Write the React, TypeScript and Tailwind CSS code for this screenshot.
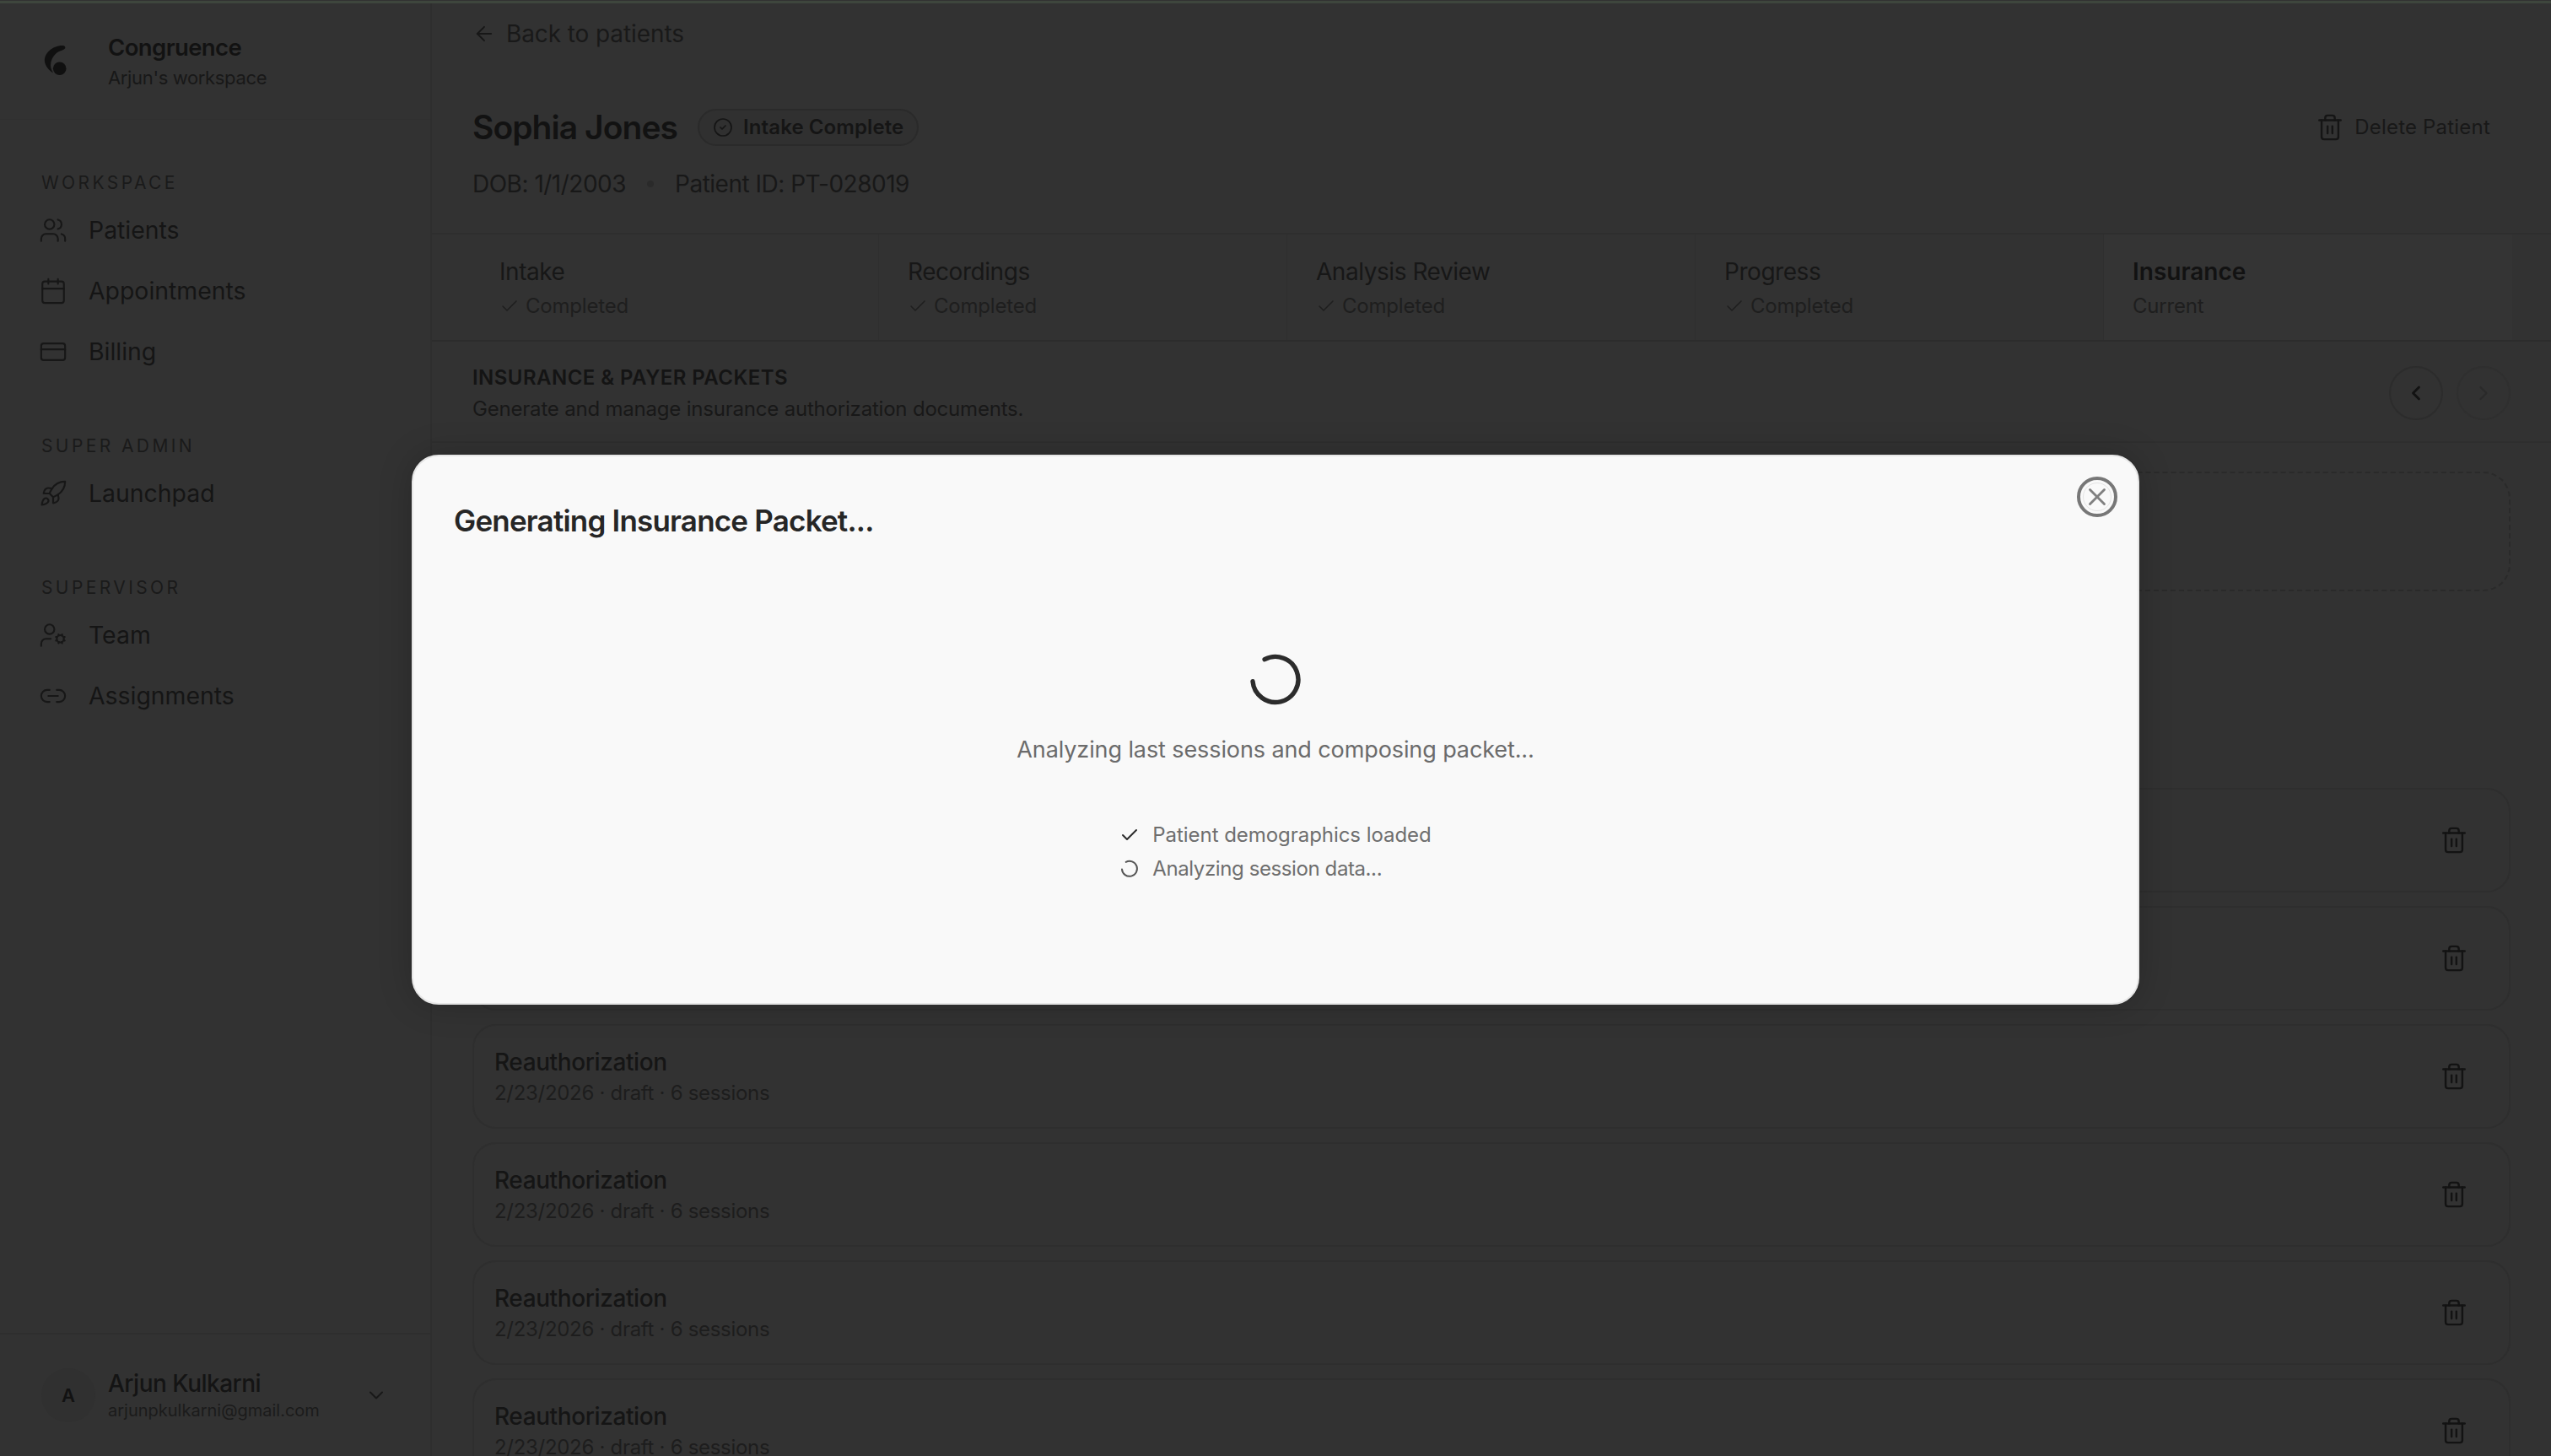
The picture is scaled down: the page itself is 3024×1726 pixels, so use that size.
import React from "react";
import { ArrowLeft, Calendar, Check, ChevronDown, ChevronLeft, ChevronRight, CircleCheck, CreditCard, Link2, Rocket, Trash2, UserCog, Users, X } from "lucide-react";

const font = "font-['Inter','Liberation_Sans',sans-serif]";

function NavItem({ icon: Icon, label }: { icon: React.ElementType; label: string }) {
  return (
    <div className="flex h-[72px] items-center gap-[25px] text-[#151515]">
      <Icon size={34} strokeWidth={1.5} className="-ml-[3px] shrink-0 text-[#171717]" />
      <span className="text-[28.4px]">{label}</span>
    </div>
  );
}

function NavGroup({ title, className, children }: { title: string; className: string; children: React.ReactNode }) {
  return (
    <div className={className}>
      <div className="h-[30px] text-[21px] leading-[30px] tracking-[3.4px] text-[#1a1a1a]">{title}</div>
      <div className="mt-[5px] flex flex-col">{children}</div>
    </div>
  );
}

function Step({ name, status, current }: { name: string; status: string; current?: boolean }) {
  return (
    <div className={`flex w-[484px] flex-col justify-center pl-[34px] pr-8 ${current ? "bg-[#343434]" : "border-r border-[#2f2f2f]"}`}>
      <div className={`text-[28px] leading-[40px] ${current ? "font-semibold text-[#121212]" : "tracking-[-0.45px] text-[#171717]"}`}>{name}</div>
      <div className="mt-[5px] flex h-[32px] items-center gap-[7px] text-[24px] tracking-[-0.2px] text-[#1e1e1e]">
        {!current && <Check size={24} strokeWidth={1.5} className="shrink-0" />}
        <span>{status}</span>
      </div>
    </div>
  );
}

function PacketRow() {
  return (
    <div className="flex h-[124px] shrink-0 items-center justify-between rounded-[28px] border-2 border-[#2e2e2e] pl-[24px] pr-[48px]">
      <div>
        <div className="text-[28px] font-medium leading-[38px] tracking-[-0.4px] text-[#151515]">Reauthorization</div>
        <div className="mt-[1px] text-[24px] leading-[34px] tracking-[-0.3px] text-[#1d1d1d]">2/23/2026 · draft · 6 sessions</div>
      </div>
      <Trash2 size={34} strokeWidth={1.7} className="text-[#131313]" />
    </div>
  );
}

export default function App() {
  return (
    <div className={`${font} relative flex h-screen w-full flex-col overflow-hidden bg-[#323232]`}>
      <div className="h-[4px] shrink-0 border-t border-[#323232] bg-[#3e463d]" />
      <div className="flex min-h-0 flex-1">
        <aside className="flex w-[512px] shrink-0 flex-col border-r-2 border-[#2e2e2e]">
          <div className="flex h-[138px] items-start gap-[37px] border-b border-[#303030] pl-[50px] pt-[32px]">
            <svg width="32" height="38" viewBox="0 0 32 38" className="mt-[16px] shrink-0 text-[#101010]" fill="currentColor">
              <path d="M25 2C20 1.4 13 3.6 8 8.4C4 12 2.4 17 3 21C3.6 26 8 31.4 13 34.5C10.4 30 9.6 27 10.2 23C11 17 15 11.8 19 9.4C21.5 8 25.4 7.6 27 5.6C28 4 26.6 2.2 25 2Z" />
              <circle cx="20.7" cy="29.3" r="7.8" />
            </svg>
            <div className="ml-[9px]">
              <div className="text-[27.5px] font-semibold leading-[40px] tracking-[-0.6px] text-[#121212]">Congruence</div>
              <div className="text-[22px] leading-[32px] tracking-[-0.35px] text-[#181818]">Arjun's workspace</div>
            </div>
          </div>
          <div className="flex-1 pl-[49px]">
            <NavGroup title="WORKSPACE" className="mt-[60px]">
              <NavItem icon={Users} label="Patients" />
              <NavItem icon={Calendar} label="Appointments" />
              <NavItem icon={CreditCard} label="Billing" />
            </NavGroup>
            <NavGroup title="SUPER ADMIN" className="mt-[61px]">
              <NavItem icon={Rocket} label="Launchpad" />
            </NavGroup>
            <NavGroup title="SUPERVISOR" className="mt-[61px]">
              <NavItem icon={UserCog} label="Team" />
              <NavItem icon={Link2} label="Assignments" />
            </NavGroup>
          </div>
          <div className="flex h-[146px] items-center border-t-2 border-[#2e2e2e] pl-[49px] pr-[50px]">
            <div className="flex h-[64px] w-[64px] items-center justify-center rounded-full bg-[#303030] text-[22px] font-semibold text-[#121212]">A</div>
            <div className="ml-[15px] flex-1">
              <div className="text-[28px] font-medium leading-[36px] tracking-[-0.5px] text-[#141414]">Arjun Kulkarni</div>
              <div className="text-[20px] leading-[28px] text-[#1b1b1b]">arjunpkulkarni@gmail.com</div>
            </div>
            <ChevronDown size={28} strokeWidth={1.7} className="text-[#181818]" />
          </div>
        </aside>

        <main className="flex min-w-0 flex-1 flex-col overflow-hidden">
          <div className="flex h-[274px] shrink-0 flex-col border-b-2 border-[#2e2e2e] px-[48px]">
            <div className="mt-[16px] flex h-[40px] items-center gap-[12px] text-[28px] tracking-[-0.1px] text-[#191919]">
              <ArrowLeft size={28} strokeWidth={1.6} className="text-[#171717]" />
              <span>Back to patients</span>
            </div>
            <div className="mt-[67px] flex h-[48px] items-center justify-between">
              <div className="flex items-center gap-[24px]">
                <span className="text-[39px] font-semibold tracking-[-0.95px] text-[#121212]">Sophia Jones</span>
                <span className="flex h-[44px] items-center gap-[12px] rounded-full border-2 border-[#2a2a2a] bg-[#303030] px-[16px] text-[24px] font-semibold tracking-[0.1px] text-[#151515]">
                  <CircleCheck size={24} strokeWidth={1.7} />
                  Intake Complete
                </span>
              </div>
              <div className="flex items-center gap-[12px] pr-[24px] text-[24px] tracking-[0.2px] text-[#181818]">
                <Trash2 size={34} strokeWidth={1.7} className="text-[#151515]" />
                <span>Delete Patient</span>
              </div>
            </div>
            <div className="mt-[23px] flex h-[40px] items-center text-[28px] tracking-[-0.5px] text-[#181818]">
              <span>DOB: 1/1/2003</span>
              <span className="mx-[25px] h-[8px] w-[8px] rounded-full bg-[#2a2a2a]" />
              <span>Patient ID: PT-028019</span>
            </div>
          </div>

          <div className="flex h-[127px] shrink-0 border-b-2 border-[#2c2c2c] pl-[46px]">
            <Step name="Intake" status="Completed" />
            <Step name="Recordings" status="Completed" />
            <Step name="Analysis Review" status="Completed" />
            <Step name="Progress" status="Completed" />
            <Step name="Insurance" status="Current" current />
          </div>

          <div className="flex h-[120px] shrink-0 items-center justify-between border-b-2 border-[#2e2e2e] px-[48px] pt-[4px]">
            <div>
              <div className="text-[24px] font-semibold leading-[36px] tracking-[0.45px] text-[#141414]">INSURANCE &amp; PAYER PACKETS</div>
              <div className="text-[24px] leading-[37px] tracking-[-0.2px] text-[#181818]">Generate and manage insurance authorization documents.</div>
            </div>
            <div className="flex gap-[16px]">
              <div className="flex h-[64px] w-[64px] items-center justify-center rounded-full border-2 border-[#2c2c2c] text-[#121212]">
                <ChevronLeft size={28} strokeWidth={2.4} />
              </div>
              <div className="flex h-[64px] w-[64px] items-center justify-center rounded-full border-2 border-[#2f2f2f] text-[#2a2a2a]">
                <ChevronRight size={28} strokeWidth={2} />
              </div>
            </div>
          </div>

          <div className="flex flex-col gap-[16px] px-[48px] pt-[34px]">
            <div className="h-[142px] shrink-0 rounded-[32px] border-2 border-dashed border-[#2a2a2a]" />
            <div className="h-[201px] shrink-0" />
            <PacketRow />
            <PacketRow />
            <PacketRow />
            <PacketRow />
            <PacketRow />
            <PacketRow />
          </div>
        </main>
      </div>

      <div className="absolute left-[488px] top-[539px] flex h-[652px] w-[2048px] flex-col rounded-[32px] border-2 border-[#e6e6e6] bg-[#f9f9f9] shadow-[0_0_40px_rgba(0,0,0,0.2)]">
        <div className="flex items-start justify-between pl-[48px] pr-[24px] pt-[24px]">
          <h2 className="mt-[30px] text-[35px] font-semibold leading-[44px] tracking-[-0.8px] text-[#262626]">Generating Insurance Packet...</h2>
          <button className="flex h-[48px] w-[48px] items-center justify-center rounded-full border-[4px] border-[#777777] text-[#808080]">
            <span className="flex h-[34px] w-[34px] items-center justify-center rounded-full border border-[#e4e4e4]">
              <X size={34} strokeWidth={2} className="shrink-0" />
            </span>
          </button>
        </div>
        <div className="mt-[131px] flex flex-col items-center">
          <svg width="72" height="72" viewBox="0 0 24 24" fill="none" stroke="#2c2c2c" strokeWidth="1.8" strokeLinecap="round">
            <path d="M7.7 3.9A9 9 0 1 1 3 12.6" />
          </svg>
          <p className="mt-[27px] text-[27px] leading-[40px] tracking-[-0.1px] text-[#6b6b6b]">Analyzing last sessions and composing packet...</p>
          <div className="mt-[61px] flex flex-col text-[24px] leading-[40px] tracking-[-0.05px] text-[#6e6e6e]">
            <div className="flex items-center gap-[15px]">
              <Check size={24} strokeWidth={2} className="text-[#2c2c2c]" />
              <span>Patient demographics loaded</span>
            </div>
            <div className="flex items-center gap-[15px]">
              <svg width="24" height="24" viewBox="0 0 24 24" fill="none" stroke="#555555" strokeWidth="2" strokeLinecap="round">
                <path d="M7.7 3.9A9 9 0 1 1 3 12.6" />
              </svg>
              <span className="tracking-[-0.4px]">Analyzing session data...</span>
            </div>
          </div>
        </div>
      </div>
    </div>
  );
}
